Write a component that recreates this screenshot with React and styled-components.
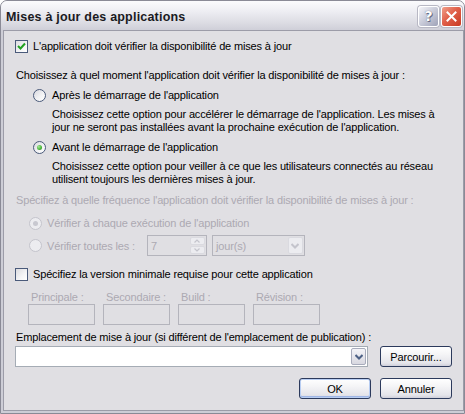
import React from 'react';
import styled, { createGlobalStyle, css } from 'styled-components';

const Global = createGlobalStyle`
  html, body { margin: 0; padding: 0; background: #ffffff; }
  body { font-family: "Liberation Sans", Arial, sans-serif; font-size: 11px; letter-spacing: -0.15px; color: #000; }
  #root { width: 465px; height: 414px; }
`;

const Window = styled.div`
  width: 465px;
  height: 414px;
  box-sizing: border-box;
  display: flex;
  flex-direction: column;
  border: 1px solid #8a8a96;
  border-radius: 7px 7px 0 0;
  background: #d4d4dc;
  overflow: hidden;
`;

const TitleBar = styled.div`
  height: 29px;
  flex: none;
  display: flex;
  align-items: center;
  justify-content: space-between;
  padding: 0 2px 0 5px;
  background: linear-gradient(to bottom, #fbfbfd 0%, #eeeef3 35%, #dcdce3 75%, #cfcfd8 100%);
`;

const Title = styled.div`
  font-family: "Liberation Sans", Arial, sans-serif;
  font-weight: bold;
  font-size: 12.5px;
  color: #1a1a22;
  letter-spacing: 0.2px;
  padding-top: 2px;
`;

const TitleButtons = styled.div`
  display: flex;
  gap: 2px;
  padding-top: 1px;
`;

const CaptionButton = styled.div`
  width: 21px;
  height: 21px;
  box-sizing: border-box;
  border: 1px solid #ffffff;
  border-radius: 3px;
  display: flex;
  align-items: center;
  justify-content: center;
  ${(p) =>
    p.$close
      ? css`
          background: linear-gradient(135deg, #f0a08c 0%, #e0604a 45%, #c83a22 100%);
          box-shadow: 0 0 0 1px #b8b8c4;
        `
      : css`
          background: linear-gradient(135deg, #f4f4f8 0%, #c8cad8 50%, #9ea2b8 100%);
          box-shadow: 0 0 0 1px #b8b8c4;
        `}
`;

const HelpGlyph = styled.span`
  font-family: "DejaVu Sans", sans-serif;
  font-weight: bold;
  font-size: 14px;
  color: #ffffff;
  text-shadow: 0 0 1px #50566e, 1px 1px 0 #6a708a;
  line-height: 1;
`;

const Frame = styled.div`
  flex: 1;
  display: flex;
  border-left: 2px solid #cdcdd6;
  border-right: 2px solid #cdcdd6;
  border-bottom: 2px solid #cdcdd6;
`;

const Body = styled.div`
  flex: 1;
  display: flex;
  flex-direction: column;
  border: 1px solid #9c9ca8;
  background: #e0dfe3;
  padding: 7px 11px 0 11px;
`;

const Row = styled.div`
  display: flex;
  align-items: center;
  height: ${(p) => p.$h || 16}px;
  margin-top: ${(p) => p.$mt || 0}px;
  margin-left: ${(p) => p.$ml || 0}px;
  gap: ${(p) => p.$gap || 0}px;
`;

const Label = styled.span`
  color: ${(p) => (p.$disabled ? '#aca9b2' : '#000')};
  margin-left: ${(p) => p.$ml || 0}px;
  white-space: nowrap;
`;

const Desc = styled.div`
  margin-top: ${(p) => p.$mt || 0}px;
  margin-left: 37px;
  line-height: 13px;
`;

const CheckBox = styled.div`
  width: 13px;
  height: 13px;
  box-sizing: border-box;
  border: 1px solid #4a5a7a;
  background: linear-gradient(135deg, #dcdce0 0%, #f4f4f6 60%, #ffffff 100%);
  display: flex;
  align-items: center;
  justify-content: center;
  flex: none;
`;

const Radio = styled.div`
  width: 13px;
  height: 13px;
  box-sizing: border-box;
  border-radius: 50%;
  border: 1px solid ${(p) => (p.$disabled ? '#c4c4cc' : '#4a5a7a')};
  background: ${(p) =>
    p.$disabled
      ? '#ececf0'
      : 'linear-gradient(135deg, #d8d8de 0%, #f2f2f4 55%, #ffffff 100%)'};
  display: flex;
  align-items: center;
  justify-content: center;
  flex: none;
`;

const Dot = styled.div`
  width: 5px;
  height: 5px;
  border-radius: 50%;
  background: ${(p) =>
    p.$disabled
      ? '#c8c8d0'
      : 'radial-gradient(circle at 35% 35%, #a8e89a 0%, #4cb83c 55%, #2a8a22 100%)'};
`;

const Field = styled.div`
  box-sizing: border-box;
  height: ${(p) => p.$h || 21}px;
  width: ${(p) => p.$w}px;
  border: 1px solid ${(p) => (p.$disabled ? '#b4b4bc' : '#a5acb5')};
  background: ${(p) => (p.$disabled ? '#e0dfe3' : '#ffffff')};
  display: flex;
  align-items: stretch;
  justify-content: space-between;
  flex: none;
`;

const FieldText = styled.span`
  padding-left: 3px;
  align-self: center;
  color: ${(p) => (p.$disabled ? '#aca9b2' : '#000')};
`;

const Spin = styled.div`
  width: 15px;
  margin: 1px;
  display: flex;
  flex-direction: column;
  gap: 1px;
`;

const SpinHalf = styled.div`
  flex: 1;
  border-radius: 2px;
  background: #ececf0;
  border: 1px solid #dadae0;
  display: flex;
  align-items: center;
  justify-content: center;
`;

const DropBtn = styled.div`
  width: 15px;
  margin: 1px;
  box-sizing: border-box;
  border-radius: 2px;
  display: flex;
  align-items: center;
  justify-content: center;
  ${(p) =>
    p.$disabled
      ? css`
          background: #ececf0;
          border: 1px solid #dadae0;
        `
      : css`
          background: linear-gradient(to bottom, #f4f4f8 0%, #d8d8e0 100%);
          border: 1px solid #a8acbc;
        `}
`;

const VersionGrid = styled.div`
  display: grid;
  grid-template-columns: repeat(4, 67px);
  column-gap: 8px;
  margin-left: 13px;
  margin-top: 8px;
`;

const VersionLabel = styled.div`
  height: 14px;
  line-height: 14px;
  padding-left: 3px;
  color: #aca9b2;
  white-space: nowrap;
`;

const VersionBox = styled.div`
  box-sizing: border-box;
  height: 21px;
  border: 1px solid #b4b4bc;
  background: #e0dfe3;
`;

const Button = styled.div`
  box-sizing: border-box;
  width: 72px;
  height: 21px;
  border: 1px solid #2c3a5c;
  border-radius: 3px;
  background: linear-gradient(to bottom, #ffffff 0%, #f4f4f6 40%, #e4e4ea 85%, #cfcfda 100%);
  display: flex;
  align-items: center;
  justify-content: center;
  flex: none;
  ${(p) =>
    p.$default &&
    css`
      box-shadow: inset 0 0 0 1px #b8cdf2, inset 0 -1px 0 1px #9fb6e6;
    `}
`;

const ButtonRow = styled.div`
  display: flex;
  justify-content: flex-end;
  gap: 9px;
  margin-top: 11px;
`;

const Chevron = ({ color = '#4d6185' }) => (
  <svg width="8" height="6" viewBox="0 0 8 6">
    <path d="M0.5 1 L4 4.5 L7.5 1" fill="none" stroke={color} strokeWidth="2" />
  </svg>
);

const Check = () => (
  <svg width="9" height="9" viewBox="0 0 9 9">
    <path d="M1 4 L3.5 6.5 L8 1.5" fill="none" stroke="#21a121" strokeWidth="2" />
  </svg>
);

const CloseX = () => (
  <svg width="11" height="11" viewBox="0 0 11 11">
    <path d="M1.5 1.5 L9.5 9.5 M9.5 1.5 L1.5 9.5" stroke="#ffffff" strokeWidth="2" strokeLinecap="square" />
  </svg>
);

const SpinArrow = ({ up }) => (
  <svg width="6" height="4" viewBox="0 0 6 4">
    <path d={up ? 'M0.5 3.5 L3 1 L5.5 3.5' : 'M0.5 0.5 L3 3 L5.5 0.5'} fill="none" stroke="#c4c4cc" strokeWidth="1.2" />
  </svg>
);

export default function App() {
  return (
    <>
      <Global />
      <Window>
        <TitleBar>
          <Title>Mises à jour des applications</Title>
          <TitleButtons>
            <CaptionButton>
              <HelpGlyph>?</HelpGlyph>
            </CaptionButton>
            <CaptionButton $close>
              <CloseX />
            </CaptionButton>
          </TitleButtons>
        </TitleBar>
        <Frame>
          <Body>
            <Row $gap={5}>
              <CheckBox>
                <Check />
              </CheckBox>
              <Label>L'application doit vérifier la disponibilité de mises à jour</Label>
            </Row>
            <Row $mt={13}>
              <Label $ml={1}>Choisissez à quel moment l'application doit vérifier la disponibilité de mises à jour :</Label>
            </Row>
            <Row $mt={4} $ml={18} $gap={6}>
              <Radio />
              <Label>Après le démarrage de l'application</Label>
            </Row>
            <Desc $mt={5}>
              Choisissez cette option pour accélérer le démarrage de l'application. Les mises à
              <br />
              jour ne seront pas installées avant la prochaine exécution de l'application.
            </Desc>
            <Row $mt={5} $ml={18} $gap={6}>
              <Radio>
                <Dot />
              </Radio>
              <Label>Avant le démarrage de l'application</Label>
            </Row>
            <Desc $mt={5}>
              Choisissez cette option pour veiller à ce que les utilisateurs connectés au réseau
              <br />
              utilisent toujours les dernières mises à jour.
            </Desc>
            <Row $mt={6}>
              <Label $ml={1} $disabled>
                Spécifiez à quelle fréquence l'application doit vérifier la disponibilité de mises à jour :
              </Label>
            </Row>
            <Row $mt={7} $ml={14} $gap={5}>
              <Radio $disabled>
                <Dot $disabled />
              </Radio>
              <Label $disabled>Vérifier à chaque exécution de l'application</Label>
            </Row>
            <Row $mt={4} $ml={14} $h={21}>
              <Radio $disabled />
              <Label $disabled $ml={5}>
                Vérifier toutes les :
              </Label>
              <Field $disabled $w={60} style={{ marginLeft: 12 }}>
                <FieldText $disabled>7</FieldText>
                <Spin>
                  <SpinHalf>
                    <SpinArrow up />
                  </SpinHalf>
                  <SpinHalf>
                    <SpinArrow />
                  </SpinHalf>
                </Spin>
              </Field>
              <Field $disabled $w={93} style={{ marginLeft: 5 }}>
                <FieldText $disabled>jour(s)</FieldText>
                <DropBtn $disabled>
                  <Chevron color="#c4c4cc" />
                </DropBtn>
              </Field>
            </Row>
            <Row $mt={10} $gap={5}>
              <CheckBox />
              <Label>Spécifiez la version minimale requise pour cette application</Label>
            </Row>
            <VersionGrid>
              <VersionLabel>Principale :</VersionLabel>
              <VersionLabel>Secondaire :</VersionLabel>
              <VersionLabel>Build :</VersionLabel>
              <VersionLabel>Révision :</VersionLabel>
              <VersionBox />
              <VersionBox />
              <VersionBox />
              <VersionBox />
            </VersionGrid>
            <Row $mt={5} $h={14}>
              <Label $ml={1}>Emplacement de mise à jour (si différent de l'emplacement de publication) :</Label>
            </Row>
            <Row $mt={2} $h={21} $gap={12}>
              <Field $w={353}>
                <FieldText />
                <DropBtn>
                  <Chevron />
                </DropBtn>
              </Field>
              <Button>Parcourir...</Button>
            </Row>
            <ButtonRow>
              <Button $default>OK</Button>
              <Button>Annuler</Button>
            </ButtonRow>
          </Body>
        </Frame>
      </Window>
    </>
  );
}
